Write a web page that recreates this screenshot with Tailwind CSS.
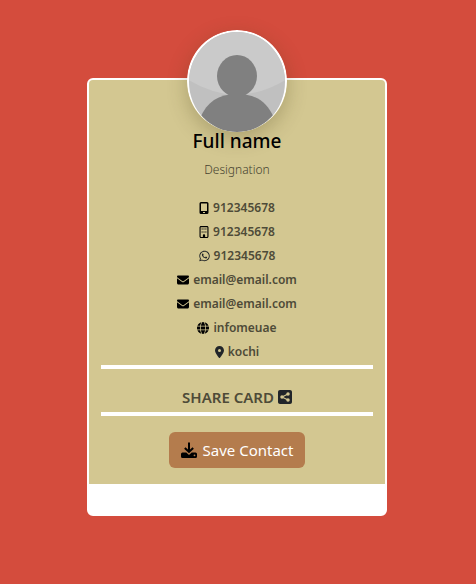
<!DOCTYPE html>
<html lang="en">
<head>
<meta charset="utf-8">
<meta name="viewport" content="width=device-width, initial-scale=1">
<title>Contact card</title>
<script src="https://cdn.jsdelivr.net/npm/@tailwindcss/browser@4"></script>
</head>
<body class="min-h-screen bg-[#d44c3d] pt-[78px] pr-0.5 pb-8 font-['Noto_Sans','Open_Sans',sans-serif] text-[#212529]">
<main class="mx-auto w-full max-w-[300px] rounded-md border-2 border-white bg-white pb-[30px]">
  <section class="flex flex-col items-center rounded-t bg-[#d3c791] px-3 pb-4 text-center">
    <svg class="-mt-[50px] h-[102px] w-[100px] shrink-0 rounded-full shadow-[0_6px_20px_rgba(70,60,20,0.28)]" viewBox="0 0 100 102" role="img" aria-label="Profile picture">
      <defs><clipPath id="face"><ellipse cx="50" cy="52" rx="48" ry="50"/></clipPath></defs>
      <ellipse cx="50" cy="51" rx="50" ry="51" fill="#fff"/>
      <g clip-path="url(#face)">
        <rect width="100" height="102" fill="#c0c0c0"/>
        <path d="M0 0H100V49Q76 64 50 65Q24 64 0 49Z" fill="#cacaca"/>
        <ellipse cx="50" cy="46" rx="20" ry="21" fill="#808080"/>
        <path d="M13 88C20 72 31 64 50 64S80 72 87 88V102H13Z" fill="#808080"/>
      </g>
    </svg>
    <h1 class="-mt-[3px] text-[19px] leading-6 font-medium text-black">Full name</h1>
    <p class="mt-[7px] text-xs leading-5 font-light text-[#45422f]">Designation</p>

    <ul class="mt-4 text-xs leading-6 font-semibold text-[#4e4b38]">
      <li><a href="#" class="flex items-center justify-center gap-1">
        <svg class="h-3 w-[10px] text-black" viewBox="0 0 10 12" fill="currentColor" aria-hidden="true"><path fill-rule="evenodd" d="M2 0h6a1.500 1.500 0 0 1 1.500 1.500v9a1.500 1.500 0 0 1-1.500 1.500H2a1.500 1.500 0 0 1-1.500-1.500v-9A1.500 1.500 0 0 1 2 0ZM2 1.500V9h6V1.500ZM4 10v1h2v-1Z"/></svg>912345678</a></li>
      <li><a href="#" class="flex items-center justify-center gap-1">
        <svg class="h-3 w-[10px] text-black" viewBox="0 0 384 512" fill="currentColor" aria-hidden="true"><path d="M64 48c-8.8 0-16 7.2-16 16V448c0 8.8 7.2 16 16 16h80V400c0-26.500 21.500-48 48-48s48 21.500 48 48v64h80c8.800 0 16-7.200 16-16V64c0-8.800-7.200-16-16-16H64zM0 64C0 28.700 28.700 0 64 0H320c35.300 0 64 28.700 64 64V448c0 35.300-28.700 64-64 64H64c-35.300 0-64-28.700-64-64V64z" fill-rule="evenodd"/><path d="M88 104h48v48H88zM168 104h48v48h-48zM248 104h48v48h-48zM88 232h48v48H88zM168 232h48v48h-48zM248 232h48v48h-48z"/></svg>912345678</a></li>
      <li><a href="#" class="flex items-center justify-center gap-1">
        <svg class="h-3 w-[11px] text-[#212529]" viewBox="0 0 448 512" fill="currentColor" aria-hidden="true"><path d="M380.9 97.1C339 55.1 283.2 32 223.9 32c-122.4 0-222 99.6-222 222 0 39.1 10.2 77.3 29.6 111L0 480l117.7-30.9c32.4 17.7 68.9 27 106.1 27h.1c122.3 0 224.1-99.6 224.1-222 0-59.3-25.2-115-67.1-157zm-157 341.6c-33.2 0-65.7-8.9-94-25.7l-6.700-4-69.800 18.300L72 359.200l-4.400-7c-18.500-29.400-28.200-63.300-28.200-98.200 0-101.700 82.800-184.500 184.600-184.500 49.300 0 95.600 19.200 130.400 54.100 34.800 34.900 56.200 81.200 56.100 130.500 0 101.800-84.900 184.600-186.600 184.600zm101.200-138.200c-5.500-2.800-32.800-16.200-37.900-18-5.100-1.900-8.800-2.800-12.500 2.800-3.700 5.600-14.300 18-17.600 21.800-3.200 3.700-6.500 4.200-12 1.400-32.600-16.300-54-29.100-75.500-66-5.700-9.800 5.700-9.100 16.300-30.300 1.800-3.700.9-6.900-.5-9.700-1.400-2.800-12.500-30.100-17.100-41.200-4.500-10.800-9.100-9.300-12.500-9.500-3.200-.2-6.900-.2-10.600-.2-3.700 0-9.700 1.400-14.800 6.900-5.100 5.600-19.400 19-19.400 46.300 0 27.300 19.900 53.700 22.600 57.400 2.800 3.700 39.100 59.700 94.800 83.800 35.200 15.200 49 16.500 66.600 13.900 10.700-1.600 32.800-13.400 37.400-26.400 4.600-13 4.600-24.100 3.200-26.400-1.300-2.500-5-3.900-10.500-6.600z"/></svg>912345678</a></li>
      <li><a href="#" class="flex items-center justify-center gap-1">
        <svg class="size-3 text-black" viewBox="0 0 512 512" fill="currentColor" aria-hidden="true"><path d="M48 64C21.5 64 0 85.5 0 112c0 15.1 7.1 29.3 19.2 38.4L236.8 313.6c11.4 8.5 27 8.5 38.4 0L492.8 150.4c12.1-9.1 19.2-23.3 19.2-38.4c0-26.5-21.5-48-48-48H48zM0 176V384c0 35.3 28.7 64 64 64H448c35.3 0 64-28.7 64-64V176L294.4 339.2c-22.8 17.1-54 17.1-76.8 0L0 176z"/></svg>email@email.com</a></li>
      <li><a href="#" class="flex items-center justify-center gap-1">
        <svg class="size-3 text-black" viewBox="0 0 512 512" fill="currentColor" aria-hidden="true"><path d="M48 64C21.5 64 0 85.5 0 112c0 15.1 7.1 29.3 19.2 38.4L236.8 313.6c11.4 8.5 27 8.5 38.4 0L492.8 150.4c12.1-9.1 19.2-23.3 19.2-38.4c0-26.5-21.5-48-48-48H48zM0 176V384c0 35.3 28.7 64 64 64H448c35.3 0 64-28.7 64-64V176L294.4 339.2c-22.8 17.1-54 17.1-76.8 0L0 176z"/></svg>email@email.com</a></li>
      <li><a href="#" class="flex items-center justify-center gap-1">
        <svg class="size-3 text-black" viewBox="0 0 512 512" fill="currentColor" aria-hidden="true"><path d="M352 256c0 22.2-1.2 43.6-3.3 64H163.3c-2.2-20.4-3.3-41.8-3.3-64s1.2-43.6 3.3-64H348.7c2.2 20.4 3.3 41.8 3.3 64zm28.8-64H503.9c5.3 20.5 8.1 41.9 8.1 64s-2.8 43.5-8.1 64H380.8c2.1-20.6 3.2-42 3.2-64s-1.1-43.4-3.2-64zm112.6-32H376.7c-10-63.9-29.8-117.4-55.3-151.6c78.3 20.7 142 77.5 171.9 151.6zm-149.1 0H167.7c6.1-36.4 15.5-68.6 27-94.7c10.5-23.6 22.2-40.7 33.5-51.5C239.4 3.2 248.7 0 256 0s16.6 3.2 27.8 13.8c11.3 10.8 23 27.9 33.5 51.5c11.6 26 20.9 58.2 27 94.7zm-209 0H18.6C48.6 85.9 112.2 29.1 190.6 8.4C165.1 42.6 145.3 96.1 135.3 160zM8.1 192H131.2c-2.1 20.6-3.2 42-3.2 64s1.1 43.4 3.2 64H8.1C2.8 299.5 0 278.1 0 256s2.8-43.5 8.1-64zM194.7 446.6c-11.6-26-20.9-58.2-27-94.6H344.3c-6.1 36.4-15.5 68.6-27 94.6c-10.5 23.6-22.2 40.7-33.5 51.5C272.6 508.8 263.3 512 256 512s-16.6-3.2-27.8-13.8c-11.3-10.8-23-27.9-33.5-51.5zM135.3 352c10 63.9 29.8 117.4 55.3 151.6C112.2 482.9 48.6 426.1 18.6 352H135.3zm358.1 0c-30 74.1-93.6 130.9-171.9 151.6c25.5-34.2 45.2-87.7 55.3-151.6H493.4z"/></svg>infomeuae</a></li>
      <li><a href="#" class="flex items-center justify-center gap-1">
        <svg class="h-3 w-[9px] text-[#212529]" viewBox="0 0 384 512" fill="currentColor" aria-hidden="true"><path d="M215.7 499.2C267 435 384 279.4 384 192C384 86 298 0 192 0S0 86 0 192c0 87.4 117 243 168.3 307.2c12.3 15.3 35.1 15.3 47.4 0zM192 128a64 64 0 1 1 0 128 64 64 0 1 1 0-128z"/></svg>kochi</a></li>
    </ul>

    <div class="mt-px w-full border-y-4 border-white pt-4 pb-[3px]">
      <a href="#" class="flex items-center justify-center gap-1 text-[15px] leading-6 font-semibold text-[#4e4b38]">SHARE CARD
        <svg class="h-4 w-[14px]" viewBox="0 0 448 512" aria-hidden="true"><path fill="#212529" d="M64 32C28.700 32 0 60.700 0 96V416c0 35.300 28.700 64 64 64H384c35.300 0 64-28.700 64-64V96c0-35.300-28.700-64-64-64H64z"/><g fill="#d3c791" stroke="#d3c791"><circle cx="320" cy="160" r="56"/><circle cx="128" cy="256" r="56"/><circle cx="320" cy="352" r="56"/><path d="M320 160L128 256l192 96" fill="none" stroke-width="36"/></g></svg></a>
    </div>

    <button type="button" class="mt-4 flex h-9 items-center gap-1.5 rounded-md bg-[#b47c4d] px-3 text-[15px] leading-6 text-white">
      <svg class="size-4 text-black" viewBox="0 0 16 16" fill="none" stroke="currentColor" aria-hidden="true"><path d="M8 0.500V9M3.800 6L8 9.800L12.200 6" stroke-width="2"/><path d="M1.500 10.500H5.300L8 13l2.700-2.500h3.800A1.500 1.500 0 0 1 16 12v2.500a1.500 1.500 0 0 1-1.500 1.500h-13A1.500 1.500 0 0 1 0 14.500V12a1.500 1.500 0 0 1 1.500-1.500Z" fill="currentColor" stroke="none"/><circle cx="13.500" cy="13.300" r="0.900" fill="#b47c4d" stroke="none"/></svg>
      Save Contact</button>
  </section>
</main>
</body>
</html>
